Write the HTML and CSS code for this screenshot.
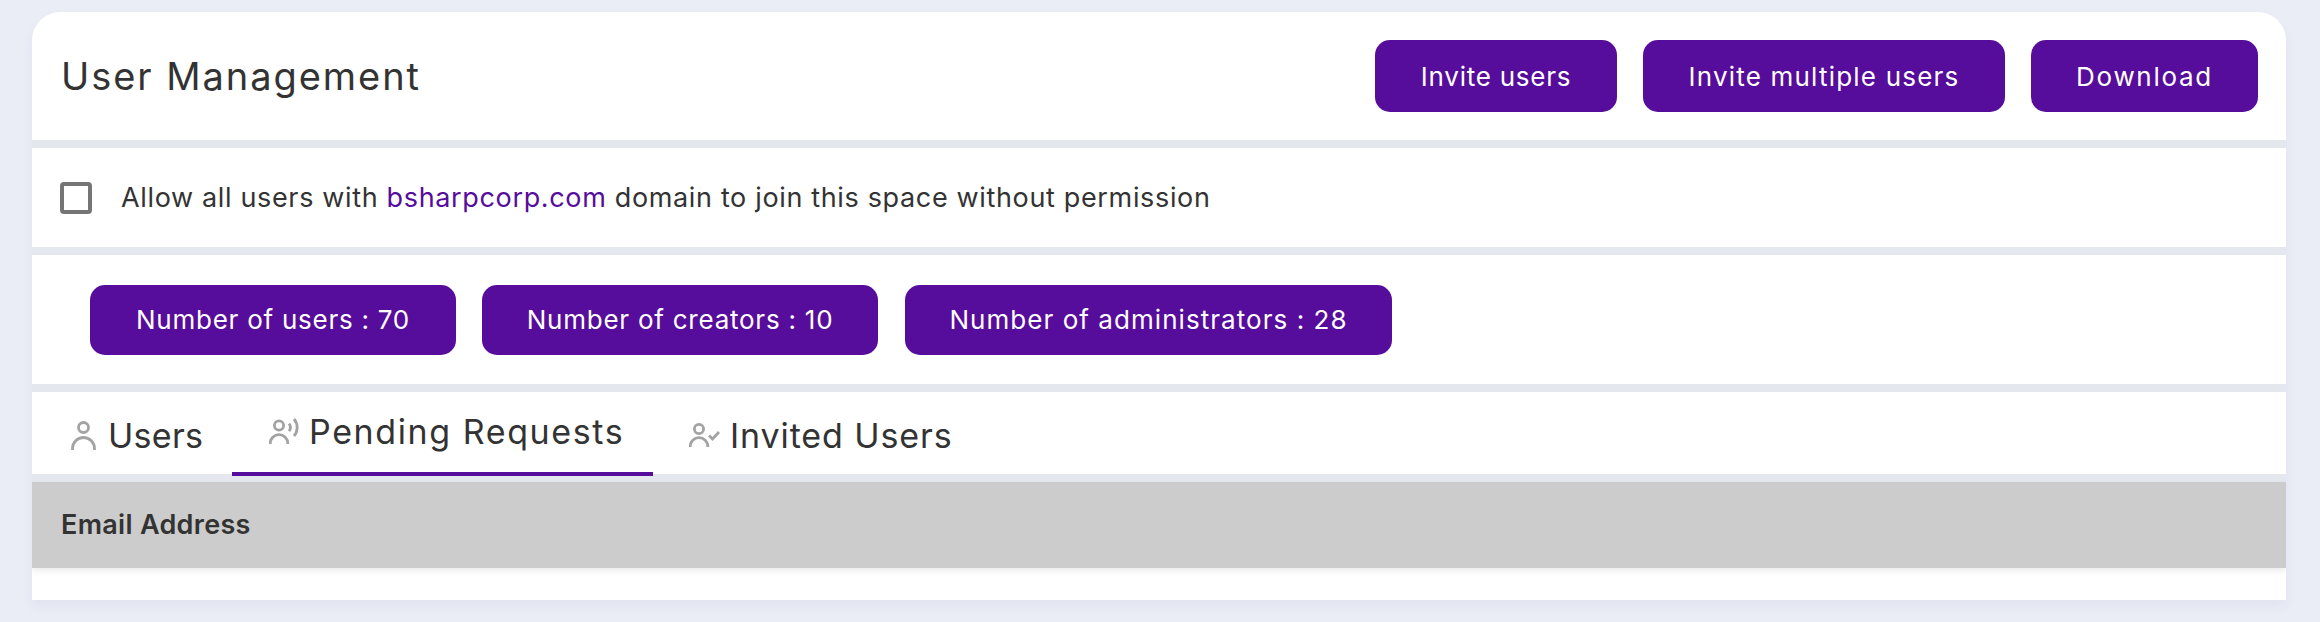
FILE: index.html
```html
<!DOCTYPE html>
<html lang="en">
<head>
<meta charset="utf-8">
<title>User Management</title>
<link rel="stylesheet" href="styles.css">
</head>
<body>
<main class="card">
  <header class="section head">
    <h1 class="title">User Management</h1>
    <div class="actions">
      <button class="btn btn-invite">Invite users</button>
      <button class="btn btn-multi">Invite multiple users</button>
      <button class="btn btn-download">Download</button>
    </div>
  </header>
  <label class="section allow">
    <span class="check"></span>
    <span class="allow-text">Allow all users with <a class="domain">bsharpcorp.com</a> domain to join this space without permission</span>
  </label>
  <section class="section stats">
    <span class="btn stat stat-users">Number of users : 70</span>
    <span class="btn stat stat-creators">Number of creators : 10</span>
    <span class="btn stat stat-admins">Number of administrators : 28</span>
  </section>
  <nav class="section tabs">
    <div class="tab tab-users">
      <svg class="ico ico-users" viewBox="0 0 25 29" aria-hidden="true"><circle cx="12.5" cy="6.5" r="5" /><path d="M1.5 29v-1.5a11 11 0 0 1 22 0V29" /></svg>
      <span>Users</span>
    </div>
    <div class="tab tab-pending active">
      <svg class="ico ico-pending" viewBox="0 0 30 26" aria-hidden="true"><circle cx="10" cy="7.5" r="4.6" /><path d="M1.2 26v-.5a8.8 8.8 0 0 1 17.6 0v.5" /><path d="M20 5.5a6 6 0 0 1 0 7.5" /><path d="M25 1a13 13 0 0 1 0 17" /></svg>
      <span>Pending Requests</span>
    </div>
    <div class="tab tab-invited">
      <svg class="ico ico-invited" viewBox="0 0 31 24" aria-hidden="true"><circle cx="10" cy="6" r="4.6" /><path d="M1.2 24v-.5a8.8 8.8 0 0 1 17.6 0v.5" /><path d="M20 12.5l3.5 3.5 6.5-7" /></svg>
      <span>Invited Users</span>
    </div>
  </nav>
  <div class="table">
    <div class="thead">Email Address</div>
    <div class="tbody"></div>
  </div>
</main>
</body>
</html>
```
FILE: styles.css
```css
* { box-sizing: border-box; }
html, body { margin: 0; height: 100%; }
body {
  background: #eaedf6;
  padding: 12px 34px 0 32px;
  font-family: Inter, "Liberation Sans", sans-serif;
  color: #333333;
  overflow: hidden;
}
.card {
  display: flex;
  flex-direction: column;
  gap: 8px;
  height: 588px;
  background: #e5e7ee;
  border-radius: 28px 28px 0 0;
  overflow: hidden;
  box-shadow: 0 6px 12px rgba(60, 60, 90, 0.05);
}
.section { background: #ffffff; display: flex; align-items: center; }
.head { height: 128px; padding: 0 28px 0 29px; justify-content: space-between; }
.title { margin: 0; font-size: 38px; font-weight: 400; letter-spacing: 1.95px; }
.actions { display: flex; gap: 26px; }
.btn {
  display: flex;
  align-items: center;
  justify-content: center;
  height: 72px;
  border: 0;
  border-radius: 15px;
  background: #570d9b;
  color: #ffffff;
  font-family: inherit;
  font-size: 26px;
  font-weight: 400;
}
.btn-invite { width: 242px; letter-spacing: 0.75px; }
.btn-multi { width: 362px; letter-spacing: 1.2px; }
.btn-download { width: 227px; letter-spacing: 1.7px; }
.allow { height: 99px; padding-left: 28px; }
.check {
  width: 32px;
  height: 32px;
  border: 4.5px solid #757575;
  border-radius: 4px;
  margin-right: 29px;
}
.allow-text { font-size: 27px; letter-spacing: 0.65px; }
.domain { color: #570d9b; }
.stats { height: 129px; padding-left: 58px; gap: 26px; }
.stat { width: 366px; height: 70px; font-size: 26px; letter-spacing: 0.75px; }
.stat-creators { width: 396px; letter-spacing: 0.76px; }
.stat-admins { width: 487px; margin-left: 1px; letter-spacing: 1.05px; }
.tabs { height: 82px; padding-left: 39px; align-items: stretch; overflow: visible; position: relative; z-index: 1; }
.tab { display: flex; align-items: center; font-size: 34px; position: relative; }
.tab-users { width: 161px; gap: 12px; padding-top: 4px; letter-spacing: 0.3px; }
.tab-pending { width: 421px; gap: 10px; padding-left: 37px; padding-bottom: 4px; letter-spacing: 1.6px; }
.tab-invited { gap: 10px; padding-left: 36px; padding-top: 4px; letter-spacing: 0.9px; }
.tab.active::after {
  content: "";
  position: absolute;
  left: 0;
  right: 0;
  bottom: -2px;
  height: 4px;
  background: #570d9b;
}
.ico { fill: none; stroke: #a3a3a3; stroke-width: 2.8; flex: none; }
.ico-users { width: 25px; height: 29px; }
.ico-pending { width: 30px; height: 26px; }
.ico-invited { width: 31px; height: 24px; }
.table { display: flex; flex-direction: column; height: 118px; flex: none; }
.thead {
  display: flex;
  align-items: center;
  height: 86px;
  padding: 0 0 2px 29px;
  background: #cccccc;
  font-size: 27px;
  font-weight: 600;
  letter-spacing: 0.3px;
  box-shadow: 0 3px 6px rgba(0, 0, 0, 0.08);
  position: relative;
}
.tbody { height: 32px; background: #ffffff; }
```
